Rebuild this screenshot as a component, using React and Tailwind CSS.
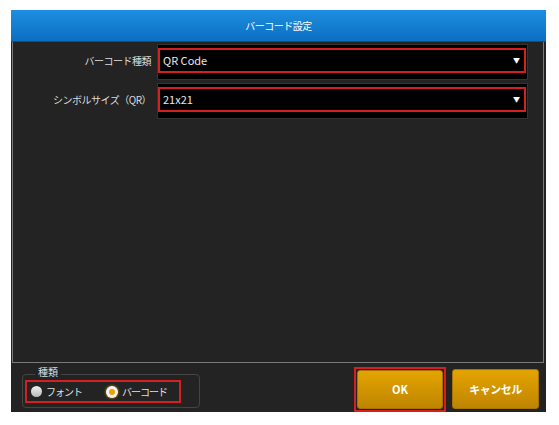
import React from 'react';

const font = { fontFamily: '"Noto Sans CJK JP", "Noto Sans", sans-serif' };

const Select = ({ value }) => (
  <div className="w-[371px] bg-black border border-[#333] pt-[3px] pr-[1px] pb-[6px]">
    <div className="h-[25px] border-2 border-[#d42020] flex items-center justify-between pl-[3px] pr-[4px]">
      <span className="text-[11px] text-[#e8e8e8] leading-none">{value}</span>
      <span className="text-[7px] text-white leading-none">▼</span>
    </div>
  </div>
);

const App = () => {
  return (
    <div className="w-[559px] h-[425px] bg-white pl-[11px] pt-[10px]" style={font}>
      <div className="w-[535px] h-[402px] bg-[#232323] flex flex-col">
        <div className="h-[32px] bg-gradient-to-b from-[#1e8ee0] to-[#0b6fc2] border-b border-[#0a4f8a] flex items-center justify-center">
          <span className="text-[10px] tracking-[-0.5px] text-white">バーコード設定</span>
        </div>
        <div className="flex-1 ml-[1px] mr-[2px] border border-t-0 border-[#7a7a7a] pt-[2px] flex flex-col gap-[3px]">
          <div className="flex items-center">
            <div className="w-[144px] text-right pr-[6px] text-[10px] tracking-[-0.5px] text-[#dcdcdc] pb-[4px] whitespace-nowrap">バーコード種類</div>
            <Select value="QR Code" />
          </div>
          <div className="flex items-center">
            <div className="w-[144px] text-right pr-[6px] text-[10px] tracking-[-0.5px] text-[#dcdcdc] pb-[4px] whitespace-nowrap">シンボルサイズ（QR）</div>
            <Select value="21x21" />
          </div>
        </div>
        <div className="h-[49px] flex items-start justify-between pl-[11px] pr-[7px]">
          <div className="relative mt-[11px] w-[178px] h-[34px] border border-[#444] rounded-[4px] pt-[5px] pl-[2px]">
            <span className="absolute -top-[8px] left-[12px] px-[3px] bg-[#232323] text-[10px] text-[#dcdcdc] leading-none">種類</span>
            <div className="w-[156px] h-[23px] border-2 border-[#d42020] flex items-center pl-[4px] gap-[4px] whitespace-nowrap">
              <span className="shrink-0 w-[11px] h-[11px] rounded-full bg-gradient-to-b from-[#f2f2f2] to-[#b8b8b8]"></span>
              <span className="text-[10px] tracking-[-1px] text-[#e0e0e0] leading-none">フォント</span>
              <span className="shrink-0 ml-[20px] w-[12px] h-[12px] rounded-full bg-[#f4f4f4] flex items-center justify-center shadow-[0_0_3px_#d49a00]">
                <span className="w-[6px] h-[6px] rounded-full bg-[#f0a000]"></span>
              </span>
              <span className="text-[10px] tracking-[-1px] text-[#e0e0e0] leading-none">バーコード</span>
            </div>
          </div>
          <div className="flex items-start gap-[6px] mt-[4px]">
            <div className="w-[92px] h-[45px] border-2 border-[#d42020] p-[1px]">
              <button className="w-full h-full rounded-[3px] bg-gradient-to-b from-[#e4a400] to-[#bf8500] border border-[#a87400] text-white text-[11px] font-bold">OK</button>
            </div>
            <button className="w-[87px] h-[40px] mt-[2px] rounded-[3px] bg-gradient-to-b from-[#e4a400] to-[#bf8500] border border-[#a87400] text-white text-[11px] font-bold tracking-[-0.5px]">キャンセル</button>
          </div>
        </div>
      </div>
    </div>
  );
};

export default App;
